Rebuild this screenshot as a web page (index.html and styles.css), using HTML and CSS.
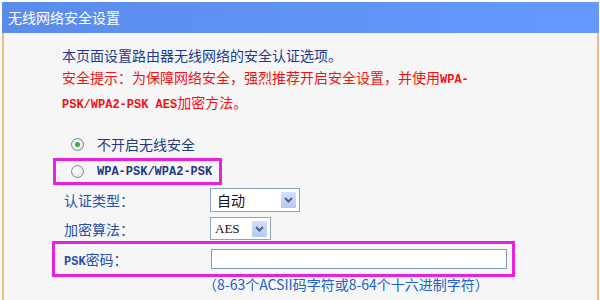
FILE: index.html
```html
<!DOCTYPE html>
<html>
<head>
  <meta charset="utf-8">
  <title>无线网络安全设置</title>
  <link rel="stylesheet" href="styles.css">
</head>
<body>
  <div class="panel">
    <div class="title">无线网络安全设置</div>
    <div class="content">
      <!-- Intro -->
      <p class="intro">本页面设置路由器无线网络的安全认证选项。<br>
        <span class="warn">安全提示：为保障网络安全，强烈推荐开启安全设置，并使用<span class="en">WPA-</span><br><span class="en">PSK/WPA2-PSK AES</span>加密方法。</span>
      </p>

      <!-- Security mode -->
      <div class="option first">
        <span class="radio checked"></span>
        <span class="opt-text">不开启无线安全</span>
      </div>
      <div class="option mark">
        <span class="radio"></span>
        <span class="opt-text en">WPA-PSK/WPA2-PSK</span>
      </div>

      <!-- Settings -->
      <div class="field auth">
        <span class="label">认证类型：</span>
        <div class="select wide">
          <span class="value">自动</span>
          <span class="arrow"><svg width="9" height="6" viewBox="0 0 9 6"><path d="M1 1 L4.5 4.5 L8 1" fill="none" stroke="#4d6185" stroke-width="2"/></svg></span>
        </div>
      </div>
      <div class="field algo">
        <span class="label">加密算法：</span>
        <div class="select narrow">
          <span class="value en">AES</span>
          <span class="arrow"><svg width="9" height="6" viewBox="0 0 9 6"><path d="M1 1 L4.5 4.5 L8 1" fill="none" stroke="#4d6185" stroke-width="2"/></svg></span>
        </div>
      </div>
      <div class="field mark psk">
        <span class="label"><span class="en">PSK</span>密码：</span>
        <div class="input"></div>
      </div>
      <div class="hint">（8-63个ACSII码字符或8-64个十六进制字符）</div>
    </div>
  </div>
</body>
</html>
```

FILE: styles.css
```css
body {
  margin: 0;
  background: #ffffff;
  font-family: "Noto Sans CJK SC", sans-serif;
  font-size: 14px;
}
.panel {
  margin: 2px 0 0 2px;
  width: 597px;
}
.title {
  height: 31px;
  line-height: 30px;
  padding-left: 6px;
  color: #ffffff;
  font-size: 14px;
  background: linear-gradient(to right, #5a8cec, #6699ff);
}
.content {
  height: 267px;
  overflow: hidden;
  background: #f6f6f6;
  border-left: 2px solid #f2bc80;
  border-right: 2px solid #f2bc80;
}
.en {
  font-family: "Liberation Mono", monospace;
  font-size: 12px;
  font-weight: bold;
}
.intro {
  margin: 0;
  padding: 11px 0 0 58px;
  line-height: 22px;
  color: #1c3b8e;
}
.warn {
  color: #ec1414;
}
.option {
  display: flex;
  align-items: center;
  height: 26px;
  color: #1f3a7e;
}
.option.first {
  margin-top: 15px;
  padding-left: 67px;
}
.option.mark {
  margin: 1px 0 0 49px;
  height: 21px;
  padding-left: 15px;
  width: 148px;
}
.mark {
  border: 3px solid #e821e0;
}
.radio {
  width: 11px;
  height: 11px;
  border: 1px solid #7d8b9e;
  border-radius: 50%;
  background: radial-gradient(circle at 40% 40%, #ffffff, #dcdcd6);
  display: flex;
  align-items: center;
  justify-content: center;
  margin-right: 13px;
}
.radio.checked::after {
  content: "";
  width: 5px;
  height: 5px;
  border-radius: 50%;
  background: #3cad3c;
}
.field {
  display: flex;
  align-items: center;
  color: #2450a6;
}
.label {
  width: 146px;
  flex-shrink: 0;
  padding-left: 60px;
}
.field.auth {
  margin-top: 3px;
  height: 24px;
}
.field.algo {
  margin-top: 5px;
  height: 23px;
}
.select {
  display: flex;
  align-items: center;
  justify-content: space-between;
  box-sizing: border-box;
  height: 100%;
  background: #ffffff;
  border: 1px solid #8da3c3;
  padding: 0 2px 0 6px;
  color: #111111;
}
.select.wide {
  width: 90px;
}
.select.narrow {
  width: 61px;
  padding-left: 4px;
}
.select .value.en {
  font-family: "Liberation Serif", serif;
  font-size: 13px;
  font-weight: normal;
}
.arrow {
  width: 17px;
  height: 18px;
  box-sizing: border-box;
  border: 1px solid #ffffff;
  border-radius: 2px;
  background: linear-gradient(#d3e0fd, #b4c8f6);
  display: flex;
  align-items: center;
  justify-content: center;
}
.field.psk {
  margin: 1px 0 0 48px;
  width: 457px;
  height: 30px;
}
.field.psk .label {
  padding-left: 9px;
  width: 147px;
}
.input {
  width: 296px;
  height: 20px;
  box-sizing: border-box;
  background: #ffffff;
  border: 1px solid #7f9db9;
}
.hint {
  margin: 0 0 0 199px;
  height: 14px;
  line-height: 14px;
  color: #2060d0;
  white-space: nowrap;
}
```
